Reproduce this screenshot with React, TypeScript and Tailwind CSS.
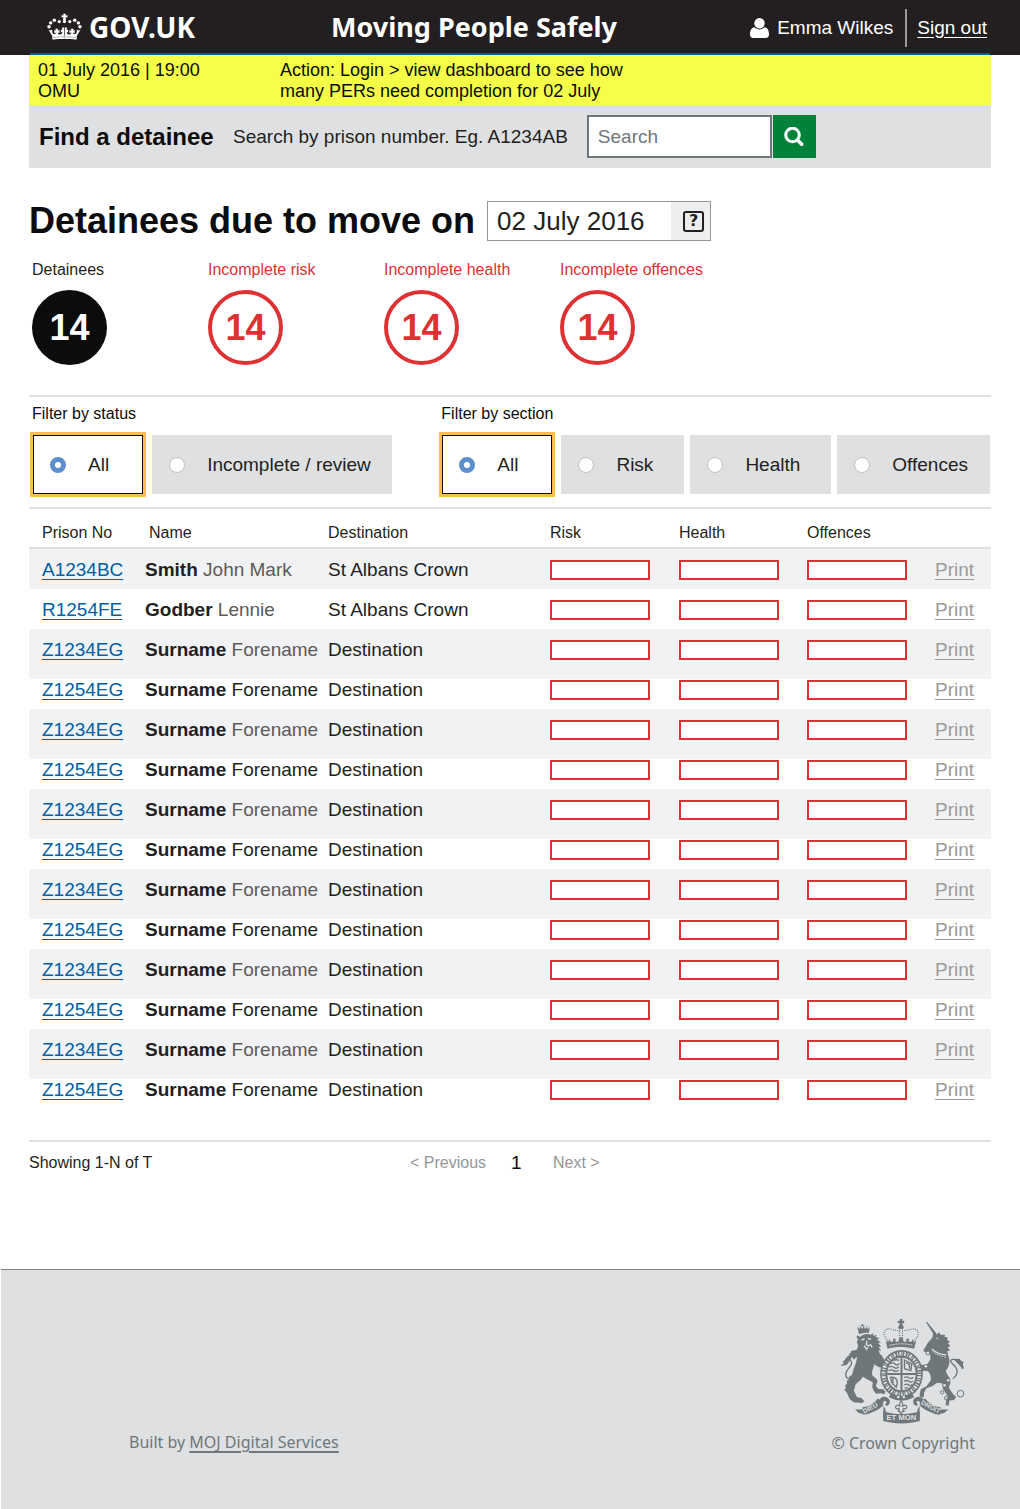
import React from "react";

type Person = {
  number: string;
  surname: string;
  forename: string;
  destination: string;
  light: boolean;
};

const namedPeople: Person[] = [
  { number: "A1234BC", surname: "Smith", forename: "John Mark", destination: "St Albans Crown", light: true },
  { number: "R1254FE", surname: "Godber", forename: "Lennie", destination: "St Albans Crown", light: true },
];

const placeholderPeople: Person[] = Array.from({ length: 12 }, (_, i) => ({
  number: i % 2 === 0 ? "Z1234EG" : "Z1254EG",
  surname: "Surname",
  forename: "Forename",
  destination: "Destination",
  light: i % 2 === 0,
}));

const totals = [
  { label: "Detainees", value: 14, filled: true },
  { label: "Incomplete risk", value: 14, filled: false },
  { label: "Incomplete health", value: 14, filled: false },
  { label: "Incomplete offences", value: 14, filled: false },
];

function CrownHalf() {
  return (
    <g>
      <circle cx="177" cy="64" r="4.800" />
      <circle cx="162" cy="60" r="5.200" />
      <circle cx="151" cy="68" r="5.200" />
      <circle cx="146" cy="80" r="5.200" />
      <path d="M144 88l6 4 2-4 4 3c-1 5 0 9 4 11 4 1 7-1 7-4l-5 1v-9l5 2-2-6h9l-2 6 6-2v9l-6-2c1 5 5 7 9 6 4-1 6-5 5-8l-4 2v-9l5 2-2-8 7 0v28c-12 0-23 1-33 3l-5-8z" />
      <path d="M155 110c11-3 24-4 38-4v11c-13 0-25 0-36 2z" />
    </g>
  );
}

function Crown() {
  return (
    <svg viewBox="140 38 106 82" className="h-[27px] w-[35px]" fill="#fff" aria-hidden="true">
      <path d="M189 40h8l-1 6 6-2v8l-6-1 2 9h-10l2-9-6 1v-8l6 2z" />
      <circle cx="193" cy="64" r="5" />
      <CrownHalf />
      <g transform="translate(386 0) scale(-1 1)">
        <CrownHalf />
      </g>
      <path d="M158 113c20-4 50-4 70 0" fill="none" stroke="#231f20" strokeWidth="1" />
    </svg>
  );
}

function RoyalArms() {
  return (
    <svg viewBox="60 54 374 318" className="h-[106px] w-[125px]" fill="#6f777b" aria-hidden="true">
      {/* Crown above the shield */}
      <path d="M239 57h8l-1 6 6-1v8l-6-1 2 8c4 3 4 7 0 10h-11c-4-3-4-7 0-10l2-8-6 1v-8l6 1z" />
      <g fill="none" stroke="#6f777b" strokeWidth="3.500" strokeDasharray="3 3.500">
        <path d="M203 122c-22-24-8-40 12-34 10 3 19 5 25 2" />
        <path d="M283 122c22-24 8-40-12-34-10 3-19 5-25 2" />
        <path d="M238 92v22M247 92v22" />
      </g>
      <path d="M197 122l7 5 3-10 5 9 8-2-2-8h9l-2 8 9 2 4-14h9l4 14 9-2-2-8h9l-2 8 8 2 5-9 3 10 7-5-6 24c-24-7-58-7-80 0z" />
      <path d="M208 136c22-6 50-6 70 0" fill="none" stroke="#dee0e2" strokeWidth="3" strokeDasharray="6 3" />

      {/* Lion */}
      <path d="M112 80l5 7 4-7 5 7 4-8 5 8 5-7 3 7 6-4-3 16c-9-2-21 0-30 4z" />
      <circle cx="127" cy="76" r="3.500" />
      <path d="M112 85q4-10 14-6M131 79q12-4 18 4" fill="none" stroke="#6f777b" strokeWidth="2" strokeDasharray="2.500 3" />
      <path d="M119 111c9-9 22-11 32-7l8-4 0 7 11-2-4 6 12 4-7 4 11 8-8 2 9 11-8 0 8 12-8-1 4 10c9 8 15 18 15 27l9 2-4 8 5 6-8 4-12-5c-8 0-16-5-21-11-4 14-9 24-7 33 6 8 17 12 16 20l-5 13 8 9 14 1 7 7-4 8-10-3-14 1-7-8-5-11 2-15-19-10-11-7c-4 10-16 16-22 24l-5 18 9 19 14 3 8 9-5 6-26-2-12-9-10-22-7-6 5-5-2-9 6-5-1-9 7-4 1-9 8-4c2-14 8-26 12-38l3-17-11 9-2-7-8 1 3-7-8-3 7-5 1-6 16-2 5-12-4-12 4-9-6-5 5-6z" />
      <path d="M124 120l9-3M143 115l10 3M141 122l-3 11 6 5 7-4 5 8M132 137l7 11 4-6" fill="none" stroke="#dee0e2" strokeWidth="4" />
      <path d="M158 204l14 7-14 1 12 9" fill="none" stroke="#dee0e2" strokeWidth="3" />
      <path d="M108 166c-12-5-23 2-24 12 8 2 13 8 9 16-5 10-15 16-16 27-1 9 3 16 11 14 8-3 12-13 14-22" fill="none" stroke="#6f777b" strokeWidth="4" />
      <path d="M61 198l11-10-6-2c9-3 11-17 23-20l8 3c-5 8-11 20-18 26z" />

      {/* Unicorn */}
      <path d="M317 66l4 0 29 36-7 5z" />
      <path d="M323 128l13-14 3-13 9 3 9-7 4 7 14 0-2 6 11 3-4 6 10 6-7 4 8 10-8 2 6 12-8 0 3 12c5 12 5 24 1 34l-6 14c0 8 4 14 8 19 7 9 3 22-1 31l13 20 9 8-7 10-13-1-3 17-9-2 3-18 5-7-16-24-2-16-15-2-14 10-18 7-7 12-1 14-9 2-4-8 4-17 17-9 13-18c1-13-2-20-8-27l-10-2-16 5-9-4-3-10-13-8-1-8 8-6 14 2 5 9 9 3 14-4 9-13-2-24-13 3-7-5z" />
      <circle cx="351" cy="115" r="2.500" fill="#dee0e2" />
      <path d="M335 147c10 9 26 17 43 18" fill="none" stroke="#dee0e2" strokeWidth="4" />
      <path d="M337 154c10 9 24 15 40 18" fill="none" stroke="#dee0e2" strokeWidth="3" strokeDasharray="4 4" />
      <path d="M398 236c13-10 17-22 9-34-9-12-20-15-14-22 5-4 12-2 16 4 8 10 17 14 18 23" fill="none" stroke="#6f777b" strokeWidth="4" />
      <path d="M402 176l17 1 5 7 6 1-2 9 4 12-7-3-7-10-8-8z" />
      <g fill="none" stroke="#6f777b" strokeWidth="3">
        <circle cx="323" cy="159" r="6" />
        <circle cx="366" cy="277" r="5" />
        <circle cx="379" cy="294" r="6" />
        <circle cx="421" cy="281" r="10" />
        <path d="M384 298c8 5 14 0 16-8" />
      </g>
      <g fill="#dee0e2">
        <circle cx="309" cy="181" r="4" />
        <circle cx="317" cy="199" r="4" />
        <circle cx="382" cy="213" r="5" />
        <circle cx="384" cy="241" r="4" />
        <circle cx="373" cy="256" r="4" />
      </g>

      {/* Garter and quartered shield */}
      <ellipse cx="244" cy="222" rx="64" ry="72" />
      <ellipse cx="244" cy="222" rx="54" ry="61" fill="none" stroke="#dee0e2" strokeWidth="11" strokeDasharray="3 4 6 3 2 4 5 5" />
      <path d="M214 278q30 20 60 0l8 14q-38 20-76 0z" />
      <circle cx="234" cy="291" r="4" fill="#dee0e2" />
      <circle cx="251" cy="291" r="4" fill="#dee0e2" />
      <ellipse cx="244" cy="222" rx="44" ry="51" fill="#dee0e2" stroke="#6f777b" strokeWidth="3" />
      <path d="M241 172h6v100h-6zM201 219h86v6h-86z" />
      <g fill="none" stroke="#6f777b" strokeWidth="4">
        <path d="M211 192q8-7 14 0t13-2M206 202q8-6 15 0t15-2M205 212q9-5 16 0t15-1M219 182q8-5 18-1" />
        <path d="M252 233q8-5 14 0t14-1M252 244q8-5 14 0t12-1M252 255q8-5 13 0t10-2M253 265q6-3 10-2" />
        <path d="M253 180l22 12-3 20-19-6zM258 188l10 6v12" />
        <path d="M211 232c20-2 24 14 17 30l-14-16zM218 234v20" />
      </g>

      {/* Motto scroll */}
      <path d="M102 328c36 4 62-10 78-32 8-10 24-6 28 4 3 9-2 17-10 18l-3-6c5-2 5-9-1-9-7 1-9 7-5 14 7 9 8 12 8 20 32 8 62 8 94 0 0-8 1-11 8-20 4-7 2-13-5-14-6 0-6 7-1 9l-3 6c-8-1-13-9-10-18 4-10 20-14 28-4 16 22 42 36 78 32-8 4-10 12-22 13-26 0-48-8-66-25l1 35c-36 16-74 16-110 0l1-35c-18 17-40 25-66 25-12-1-14-9-21-13z" />
      <path d="M189 335c36 10 74 10 110 0v28c-34 10-76 10-110 0z" />
      <path d="M128 333c22-2 40-13 54-31M360 333c-22-2-40-13-54-31" fill="none" stroke="#6f777b" strokeWidth="22" />
      <g fill="#dee0e2" fontFamily="Liberation Sans" fontWeight="700">
        <text x="199" y="361" fontSize="23">ET MON</text>
        <text transform="translate(132 341) rotate(-28)" fontSize="20">DIEU</text>
        <text transform="translate(301 312) rotate(28)" fontSize="20">DROIT</text>
      </g>
      <path d="M243 303c-6 6-6 10-3 17-5-7-13-6-14 1 0 5 5 7 10 4l2 5-4 3 5 2 4 7 4-7 5-2-4-3 2-5c5 3 10 1 10-4-1-7-9-8-14-1 3-7 3-11-3-17z" fill="#dee0e2" stroke="#6f777b" strokeWidth="3.500" />
    </svg>
  );
}

function UserIcon() {
  return (
    <svg viewBox="0 0 19 20" className="h-5 w-[19px]" fill="#fff" aria-hidden="true">
      <circle cx="9.500" cy="5.200" r="5.200" />
      <path d="M4.500 9.300c2.800 2.800 7.200 2.800 10 0C17.800 9.800 19 13 19 16.500c0 2.200-1.300 3.500-3.200 3.500H3.200C1.300 20 0 18.700 0 16.500 0 13 1.200 9.800 4.500 9.300z" />
    </svg>
  );
}

function SearchIcon() {
  return (
    <svg viewBox="0 0 20 20" className="h-5 w-5" fill="none" stroke="#fff" aria-hidden="true">
      <circle cx="8.500" cy="8" r="6.800" strokeWidth="3" />
      <path d="M13.500 13l4.200 4.200" strokeWidth="3.500" strokeLinecap="round" />
    </svg>
  );
}

function FilterOption({ name, label, checked, className }: { name: string; label: string; checked?: boolean; className?: string }) {
  const radio = (
    <input
      type="radio"
      name={name}
      defaultChecked={checked}
      className="h-4 w-4 shrink-0 appearance-none rounded-full border border-[#bfc1c3] bg-white checked:border-5 checked:border-[#5b8fcd]"
    />
  );
  if (checked) {
    return (
      <label className="border-3 border-[#ffbf47] text-[19px] leading-6 text-[#231f20]">
        <span className="flex h-[59px] items-center gap-[22px] border border-[#0b0c0c] bg-white pr-[33px] pl-4">
          {radio}
          {label}
        </span>
      </label>
    );
  }
  return (
    <label className={`flex h-[59px] items-center gap-[22px] bg-[#dee0e2] pl-[17px] text-[19px] leading-6 text-[#231f20] ${className ?? "pr-[31px]"}`}>
      {radio}
      {label}
    </label>
  );
}

function StatusBox({ label }: { label: string }) {
  return <div role="img" aria-label={label} className="h-5 w-[100px] border-2 border-[#df3034] bg-white" />;
}

function PersonRow({ person, rowClass, lineClass }: { person: Person; rowClass: string; lineClass: string }) {
  return (
    <tr className={`align-top text-[19px] ${rowClass}`}>
      <td className="pl-[13px]">
        <div className={lineClass}>
          <a href="#detainee" className="text-[#005ea5] underline underline-offset-3">{person.number}</a>
        </div>
      </td>
      <td className="whitespace-nowrap">
        <div className={lineClass}>
          <span>
            <b>{person.surname}</b>{" "}
            <span className={person.light ? "text-[#5c595a]" : ""}>{person.forename}</span>
          </span>
        </div>
      </td>
      <td><div className={lineClass}>{person.destination}</div></td>
      <td><div className={lineClass}><StatusBox label="Risk incomplete" /></div></td>
      <td><div className={lineClass}><StatusBox label="Health incomplete" /></div></td>
      <td><div className={lineClass}><StatusBox label="Offences incomplete" /></div></td>
      <td>
        <div className={lineClass}>
          <a href="#print" className="text-[#9a9a9a] underline underline-offset-3">Print</a>
        </div>
      </td>
    </tr>
  );
}

export default function App() {
  return (
    <div className="flex min-h-screen flex-col bg-white font-['Liberation_Sans',Arial,sans-serif] text-[#231f20]">
      <header className="bg-[#231f20] text-white">
        <div className="flex h-[53px] items-center pr-[33px] pl-[47px]">
          <a href="#home" className="flex w-[284px] items-center gap-[7px] font-['Noto_Sans',sans-serif] text-[28px] leading-8 font-bold">
            <Crown />
            GOV.UK
          </a>
          <div className="font-['Noto_Sans',sans-serif] text-[27px] leading-8 font-bold">Moving People Safely</div>
          <nav className="ml-auto flex items-center pt-0.5 text-[19px] leading-6">
            <span className="flex items-center gap-2">
              <UserIcon />
              Emma Wilkes
            </span>
            <span className="mr-2.5 ml-3 h-[38px] w-0.5 bg-[#999]" />
            <a href="#sign-out" className="underline underline-offset-3">Sign out</a>
          </nav>
        </div>
        <div className="mx-[30px] h-0.5 bg-[#005ea5]" />
      </header>

      <main className="mx-[29px]">
        <div className="flex bg-[#f5ff48] px-[9px] pt-[5px] pb-[3px] text-[18px] leading-[21px] text-[#0b0c0c]">
          <p className="w-[242px]">01 July 2016 | 19:00<br />OMU</p>
          <p>Action: Login &gt; view dashboard to see how<br />many PERs need completion for 02 July</p>
        </div>

        <form className="flex h-[63px] items-center bg-[#dee0e2] px-2.5" onSubmit={(e) => e.preventDefault()}>
          <h2 className="w-[194px] text-[24px] leading-8 font-bold text-[#0b0c0c]">Find a detainee</h2>
          <label htmlFor="prison-number" className="text-[19px] leading-6">Search by prison number. Eg. A1234AB</label>
          <input
            id="prison-number"
            type="text"
            placeholder="Search"
            className="ml-[19px] h-[43px] w-[185px] border-2 border-[#6f777b] bg-white px-[9px] text-[19px] placeholder:text-[#6f777b]"
          />
          <button type="submit" aria-label="Search" className="ml-px flex h-[43px] w-[43px] items-center justify-center bg-[#00823b]">
            <SearchIcon />
          </button>
        </form>

        <div className="mt-[33px] flex items-center gap-3">
          <h1 className="text-[36px] leading-9 font-bold text-[#0b0c0c]">Detainees due to move on</h1>
          <div className="flex h-10 w-[224px] border border-[#949698]">
            <input aria-label="Move date" type="text" defaultValue="02 July 2016" className="min-w-0 flex-1 bg-white pl-[9px] text-[26px]" />
            <button type="button" aria-label="Choose date" className="flex w-[39px] items-center justify-end bg-[#edeef0] pr-1.5">
              <span className="flex h-[21px] w-[21px] items-center justify-center rounded-[3px] border-2 border-[#231f20] font-['DejaVu_Sans',sans-serif] text-[16px] leading-4 font-bold">?</span>
            </button>
          </div>
        </div>

        <ul className="mt-[17px] flex">
          {totals.map((t) => (
            <li key={t.label} className="w-44 pl-[3px]">
              <p className={`text-[16px] leading-6 whitespace-nowrap ${t.filled ? "text-[#231f20]" : "text-[#df3034]"}`}>{t.label}</p>
              <p
                className={`mt-2 flex h-[75px] w-[75px] items-center justify-center rounded-full text-[36px] font-bold ${
                  t.filled ? "bg-[#0b0c0c] text-white" : "border-4 border-[#df3034] text-[#df3034]"
                }`}
              >
                {t.value}
              </p>
            </li>
          ))}
        </ul>

        <div className="mt-[30px] flex justify-between gap-6 border-y-2 border-[#dee0e2] pt-[5px] pr-px pb-2.5 pl-px">
          <fieldset>
            <legend className="pl-0.5 text-[16px] leading-6 text-[#0b0c0c]">Filter by status</legend>
            <div className="mt-1.5 flex items-center gap-1.5">
              <FilterOption name="status" label="All" checked />
              <FilterOption name="status" label="Incomplete / review" className="pr-[21px]" />
            </div>
          </fieldset>
          <fieldset>
            <legend className="pl-0.5 text-[16px] leading-6 text-[#0b0c0c]">Filter by section</legend>
            <div className="mt-1.5 flex items-center gap-1.5">
              <FilterOption name="section" label="All" checked />
              <FilterOption name="section" label="Risk" />
              <FilterOption name="section" label="Health" />
              <FilterOption name="section" label="Offences" className="pr-[22px]" />
            </div>
          </fieldset>
        </div>

        <table className="w-full table-fixed border-collapse text-left">
          <colgroup>
            <col className="w-[116px]" />
            <col className="w-[183px]" />
            <col />
            <col className="w-[129px]" />
            <col className="w-[128px]" />
            <col className="w-[128px]" />
            <col className="w-[56px]" />
          </colgroup>
          <thead>
            <tr className="h-[39px] border-b-2 border-[#dee0e2] text-[16px] leading-6 [&>th]:pt-2.5 [&>th]:font-normal">
              <th scope="col" className="pl-[13px]">Prison No</th>
              <th scope="col" className="pl-1">Name</th>
              <th scope="col">Destination</th>
              <th scope="col">Risk</th>
              <th scope="col">Health</th>
              <th scope="col">Offences</th>
              <td />
            </tr>
          </thead>
          <tbody>
            {namedPeople.map((p, i) => (
              <PersonRow key={p.number} person={p} rowClass={i === 0 ? "h-10 bg-[#f1f2f4]" : "h-10"} lineClass="flex h-10 items-center pt-0.5" />
            ))}
            {placeholderPeople.map((p, i) => (
              <PersonRow
                key={i}
                person={p}
                rowClass={i % 2 === 0 ? "h-[50px] bg-[#f1f2f4]" : "h-[30px]"}
                lineClass={i % 2 === 0 ? "flex h-10 items-center pt-0.5" : "flex h-[22px] items-center"}
              />
            ))}
          </tbody>
        </table>

        <div className="mt-[31px] flex items-center border-t-2 border-[#dee0e2] pt-[9px] text-[16px] leading-6">
          <p className="w-[381px]">Showing 1-N of T</p>
          <nav aria-label="Pages" className="flex items-center text-[#949698]">
            <a href="#previous" className="w-[101px]">&lt; Previous</a>
            <span aria-current="page" className="w-[42px] text-[19px] text-[#0b0c0c]">1</span>
            <a href="#next">Next &gt;</a>
          </nav>
        </div>
      </main>

      <footer className="mt-[94px] ml-px flex grow items-start justify-between border-t border-[#848789] bg-[#dee0e2] pt-12 pr-[45px] pb-[53px] pl-32 font-['Noto_Sans',sans-serif] text-[16px] leading-6 text-[#6f777b]">
        <p className="mt-[112px]">
          Built by <a href="#moj" className="underline decoration-2 underline-offset-3">MOJ Digital Services</a>
        </p>
        <div className="flex flex-col items-end gap-[7px]">
          <div className="pr-2.5"><RoyalArms /></div>
          <p>© Crown Copyright</p>
        </div>
      </footer>
    </div>
  );
}
